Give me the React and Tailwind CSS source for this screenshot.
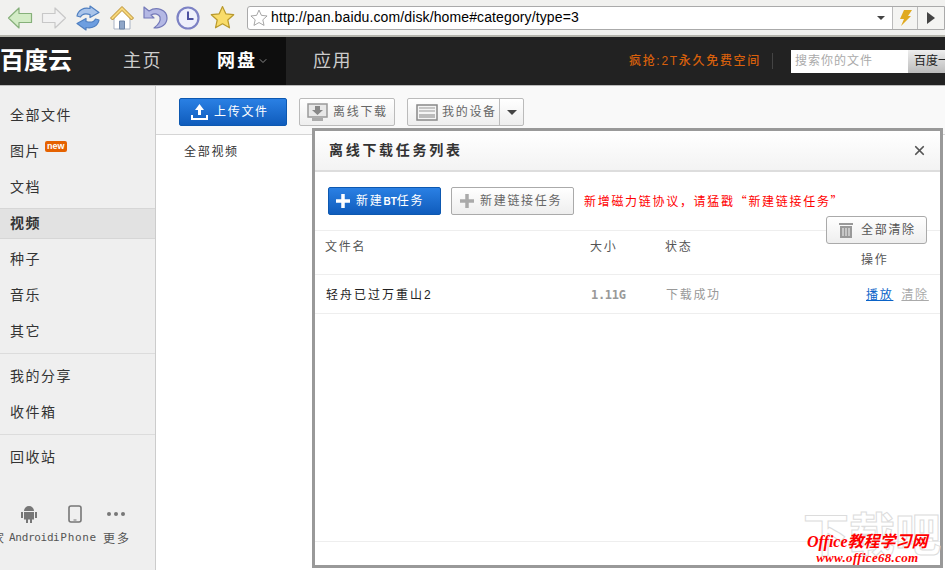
import { ChevronDown, X } from "lucide-react";

const cjk = "font-['Liberation_Sans','Noto_Sans_CJK_SC',sans-serif]";

const BackIcon = ({ flip, fill, stroke }) => (
  <svg width="26" height="24" viewBox="0 0 26 24" className={flip ? "-scale-x-100" : ""}>
    <path d="M1.500 12 12 2v5.500h12.500v9H12V22z" fill={fill} stroke={stroke} strokeWidth="1.200" strokeLinejoin="round" />
  </svg>
);

const RefreshIcon = () => (
  <svg width="26" height="26" viewBox="0 0 26 26">
    <path d="M2 11C3 5 9 2 15 3.500V1l9 6.500-9 5V9.500C10 8 7 9 5.500 12z" fill="#a9c4ea" stroke="#4f7fc0" strokeWidth="1.200" strokeLinejoin="round" />
    <path d="M24 15c-1 6-7 9-13 7.500V25l-9-6.500 9-5v3c5 1.500 8 .5 9.500-2.500z" fill="#6d9ee0" stroke="#4f7fc0" strokeWidth="1.200" strokeLinejoin="round" />
  </svg>
);

const HomeIcon = () => (
  <svg width="26" height="26" viewBox="0 0 26 26">
    <path d="M5 12v12h16V12L13 4z" fill="#fff" stroke="#a9b3c4" strokeWidth="1" />
    <path d="M10.500 24v-8h5v8z" fill="#8fa6c8" stroke="#6f86a8" strokeWidth="1" />
    <path d="M1.500 13 13 1.500 24.500 13 22.500 15 13 5.500 3.500 15z" fill="#f6d77a" stroke="#b98d2c" strokeWidth="1" strokeLinejoin="round" />
  </svg>
);

const UndoIcon = () => (
  <svg width="25" height="25" viewBox="0 0 25 25">
    <path d="M1 2v11h10L8 10c4-2 8-1 9 2 1 4-2 8-6 11 8 0 13-4 13-10C24 5 14 1 6 6z" fill="#b4b8e4" stroke="#7479b8" strokeWidth="1.200" strokeLinejoin="round" />
  </svg>
);

const ClockIcon = () => (
  <svg width="24" height="24" viewBox="0 0 24 24">
    <circle cx="12" cy="12" r="10.500" fill="#eef0fb" stroke="#7d82c4" strokeWidth="2.200" />
    <path d="M12 5.500V13h5.500" fill="none" stroke="#4d52a0" strokeWidth="2" />
  </svg>
);

const StarIcon = ({ fill, stroke, size = 25 }) => (
  <svg width={size} height={size} viewBox="0 0 25 25">
    <path d="m12.500 1.500 3.300 7.300 7.900.9-5.900 5.300 1.700 7.800-7-4-7 4 1.700-7.800L1.300 9.700l7.900-.9z" fill={fill} stroke={stroke} strokeWidth="1.200" strokeLinejoin="round" />
  </svg>
);

const UploadIcon = () => (
  <svg width="17" height="16" viewBox="0 0 17 16" fill="#fff">
    <path d="M8.500 0 13 6h-3v5H7V6H4zM0 11h2v3h13v-3h2v5H0z" />
  </svg>
);

const OfflineIcon = () => (
  <svg width="21" height="19" viewBox="0 0 21 19">
    <rect x="1" y="1" width="19" height="13" fill="#e8e8e8" stroke="#999" strokeWidth="1.500" />
    <path d="M8 3h5v4h3l-5.500 5L5 7h3z" fill="#888" />
    <path d="M5 15h11v3H5z" fill="#aaa" />
  </svg>
);

const DeviceIcon = () => (
  <svg width="22" height="19" viewBox="0 0 22 19">
    <rect x="1" y="2" width="20" height="15" fill="#f4f4f4" stroke="#888" strokeWidth="1.500" />
    <path d="M3 5h16M3 8h16" stroke="#999" />
    <rect x="3" y="11" width="16" height="4" fill="#bbb" />
  </svg>
);

const TrashIcon = () => (
  <svg width="14" height="16" viewBox="0 0 14 16" fill="#999">
    <path d="M0 1h14v2H0zM1 4h12v12H1zM3.500 6v8h1V6zm3 0v8h1V6zm3 0v8h1V6z" fillRule="evenodd" />
  </svg>
);

const AndroidIcon = () => (
  <svg width="16" height="18" viewBox="0 0 16 18" fill="#777">
    <path d="M3 6a5 5 0 0 1 10 0zM3 7h10v7.500h-2V18H9v-3.500H7V18H5v-3.500H3zM0 7h2v6H0zM14 7h2v6h-2z" />
  </svg>
);

const PhoneIcon = () => (
  <svg width="14" height="18" viewBox="0 0 14 18">
    <rect x="1" y="1" width="12" height="16" rx="2" fill="none" stroke="#777" strokeWidth="1.600" />
    <path d="M5.500 15h3" stroke="#777" />
  </svg>
);

const DotsIcon = () => (
  <svg width="18" height="4" viewBox="0 0 18 4" fill="#777">
    <circle cx="2" cy="2" r="2" />
    <circle cx="9" cy="2" r="2" />
    <circle cx="16" cy="2" r="2" />
  </svg>
);

const PlusIcon = ({ color }) => (
  <svg width="14" height="14" viewBox="0 0 14 14" fill={color}>
    <path d="M5.250 0h3.500v5.250H14v3.500H8.750V14h-3.500V8.750H0v-3.500h5.250z" />
  </svg>
);

const SideItem = ({ label, active, badge }) => (
  <div className={`flex h-9 items-center pl-2.5 text-sm tracking-[1.500px] text-[#333] ${active ? "bg-[#e2e2e2] border-y border-[#d6d6d6] h-[31px] my-[2.500px] font-bold" : ""}`}>
    {label}
    {badge && (
      <span className="mb-2.5 ml-1 rounded-[2px] bg-[#e56200] px-0.5 text-[9px] leading-[11px] font-bold tracking-normal text-white">new</span>
    )}
  </div>
);

const Divider = () => <div className="my-1 border-t border-[#dcdcdc]" />;

const App = () => {
  return (
    <div className={`relative h-[570px] w-[945px] overflow-hidden bg-white ${cjk}`}>
      {/* browser toolbar */}
      <div className="flex h-[37px] items-center border-b-2 border-[#b5b5ad] bg-[#f1f1ef] pl-[7px]">
        <div className="flex w-[240px] items-center">
          <BackIcon fill="#d3ecc6" stroke="#86b07a" />
          <div className="ml-2"><BackIcon flip fill="#f2f2f2" stroke="#c8c8c8" /></div>
          <div className="ml-2"><RefreshIcon /></div>
          <div className="ml-2"><HomeIcon /></div>
          <div className="ml-2"><UndoIcon /></div>
          <div className="ml-2"><ClockIcon /></div>
          <div className="ml-2.5"><StarIcon fill="#f9dc6a" stroke="#b99a2e" /></div>
        </div>
        <div className="flex h-[24px] flex-1 items-center rounded-l-[3px] border border-[#aaa] bg-white pl-0.5">
          <StarIcon fill="#fff" stroke="#999" size={18} />
          <span className="ml-[3px] font-['Liberation_Sans',sans-serif] text-[14px] tracking-[0.120px] text-black">http://pan.baidu.com/disk/home#category/type=3</span>
          <span className="mr-[7px] ml-auto h-0 w-0 border-x-4 border-t-4 border-x-transparent border-t-[#444]" />
          <div className="flex h-full w-[26px] items-center justify-center border-x border-[#bbb] bg-[#f4f4f2]">
            <svg width="13" height="16" viewBox="0 0 13 16"><path d="M5 0h8L9 6h3L2 16l3-7H1z" fill="#e0aa20" /></svg>
          </div>
          <div className="flex h-full w-[26px] items-center justify-center bg-[#f4f4f2]">
            <span className="h-0 w-0 border-y-[6px] border-l-[8px] border-y-transparent border-l-[#444]" />
          </div>
        </div>
      </div>

      {/* site nav */}
      <div className="flex h-[49px] items-center border-b border-[#bbb] bg-[#222]">
        <div className="w-[123px] text-[24px] leading-none font-bold text-white">百度云</div>
        <div className="w-[67px] text-[18px] tracking-[1.500px] text-[#ccc]">主页</div>
        <div className="flex h-full w-[96px] items-center bg-[#0e0e0e] pl-[27px] text-[18px] font-bold tracking-[2px] text-white">
          网盘
          <ChevronDown size={12} className="text-[#888]" />
        </div>
        <div className="ml-[27px] text-[18px] tracking-[1.500px] text-[#ccc]">应用</div>
        <div className="ml-auto text-[12px] font-medium tracking-[1.700px] text-[#d8600c]">疯抢:2T永久免费空间</div>
        <div className="mr-[18px] ml-[11px] h-4 border-l border-[#444]" />
        <div className="flex h-[23px] w-[154px] text-[12px]">
          <div className="flex w-[117px] items-center bg-white pl-1 tracking-[1px] text-[#aaa]">搜索你的文件</div>
          <div className="flex flex-1 items-center overflow-hidden bg-gradient-to-b from-[#eee] to-[#bbb] pl-1.5 whitespace-nowrap text-[#222]">百度一下</div>
        </div>
      </div>

      <div className="flex h-[484px]">
        {/* sidebar */}
        <div className="flex w-[156px] shrink-0 flex-col overflow-hidden border-r border-[#ccc] bg-[#efefef] pt-[11px]">
          <SideItem label="全部文件" />
          <SideItem label="图片" badge />
          <SideItem label="文档" />
          <SideItem label="视频" active />
          <SideItem label="种子" />
          <SideItem label="音乐" />
          <SideItem label="其它" />
          <Divider />
          <SideItem label="我的分享" />
          <SideItem label="收件箱" />
          <Divider />
          <SideItem label="回收站" />
          <div className="mt-[30px] flex items-center">
            <div className="ml-[21px] w-[46px]"><AndroidIcon /></div>
            <div className="w-[40px] pl-px"><PhoneIcon /></div>
            <DotsIcon />
          </div>
          <div className="mt-[7px] flex font-['DejaVu_Sans_Mono','Noto_Sans_CJK_SC',monospace] text-[11px] whitespace-nowrap text-[#555]">
            <span className="ml-[-8px] w-[17px] text-[12px]">家</span>
            <span className="w-[44px] tracking-[-0.300px]">Android</span>
            <span className="w-[50px] tracking-[0.700px]">iPhone</span>
            <span className="text-[12px] tracking-[2px]">更多</span>
          </div>
        </div>

        {/* main */}
        <div className="flex-1">
          <div className="flex h-[49px] items-start gap-3 border-b border-[#d5d5d5] bg-[#f9f9f9] pt-3 pl-[23px] text-[12px] tracking-[1.700px]">
            <button className="flex h-7 w-[108px] items-center rounded-[2px] border border-[#0d58b0] bg-gradient-to-b from-[#2a80e4] to-[#0f5cbc] pl-[11px] text-white">
              <UploadIcon />
              <span className="ml-1.5">上传文件</span>
            </button>
            <button className="flex h-7 w-[96px] items-center rounded-[2px] border border-[#bbb] bg-gradient-to-b from-white to-[#eee] pl-[7px] text-[#666]">
              <OfflineIcon />
              <span className="ml-[5px]">离线下载</span>
            </button>
            <div className="flex h-7 w-[117px] rounded-[2px] border border-[#bbb] bg-gradient-to-b from-white to-[#eee] text-[#666]">
              <div className="flex w-[92px] items-center border-r border-[#bbb] pl-2">
                <DeviceIcon />
                <span className="ml-1 whitespace-nowrap">我的设备</span>
              </div>
              <div className="flex flex-1 items-center justify-center">
                <span className="h-0 w-0 border-x-[5px] border-t-[5px] border-x-transparent border-t-[#444]" />
              </div>
            </div>
          </div>
          <div className="pt-2 pl-7 text-[12px] tracking-[1.700px] text-[#333]">全部视频</div>
        </div>
      </div>

      {/* offline download dialog */}
      <div className="absolute top-[128px] left-[312px] flex h-[440px] w-[631px] flex-col border-[3px] border-[#999] bg-white">
        <div className="flex h-[41px] shrink-0 items-center justify-between border-b-2 border-[#ddd] bg-gradient-to-b from-white to-[#f3f3f3] pr-[13px] pl-[14px]">
          <span className="text-[14px] font-bold tracking-[2.700px] text-[#333]">离线下载任务列表</span>
          <X size={15} strokeWidth={2.800} className="text-[#555]" />
        </div>
        <div className="flex h-[59px] shrink-0 items-center border-b border-[#eee] pl-[13px] text-[12px] tracking-[1.700px]">
          <button className="flex h-7 w-[113px] items-center rounded-[2px] border border-[#0d58b0] bg-gradient-to-b from-[#2a80e4] to-[#0f5cbc] pl-[7px] text-white">
            <PlusIcon color="#fff" />
            <span className="ml-1.5">新建<span className="text-[10px] font-bold tracking-normal">BT</span>任务</span>
          </button>
          <button className="ml-2.5 flex h-7 w-[123px] items-center rounded-[2px] border border-[#aaa] bg-gradient-to-b from-white to-[#eee] pl-[8px] text-[#666]">
            <PlusIcon color="#aaa" />
            <span className="ml-1.5">新建链接任务</span>
          </button>
          <span className="ml-2.5 font-['Noto_Sans_CJK_SC',sans-serif] tracking-[1.700px] text-[#f00]">{"新增磁力链协议\uFF0C请猛戳\u201C新建链接任务\u201D"}</span>
        </div>
        <div className="flex h-[44px] shrink-0 border-b border-[#eee] pt-[7px] pl-[10px] text-[12px] tracking-[1.700px] text-[#555]">
          <span className="w-[265px]">文件名</span>
          <span className="w-[75px]">大小</span>
          <span className="w-[196px]">状态</span>
          <span className="mt-[13px]">操作</span>
        </div>
        <div className="flex h-[39px] shrink-0 items-center border-b border-[#eee] pt-0.5 pl-[11px] text-[12px] tracking-[1.700px]">
          <span className="w-[265px] tracking-[2px] text-[#222]">轻舟已过万重山2</span>
          <span className="w-[75px] font-['DejaVu_Sans_Mono',monospace] text-[12px] font-bold tracking-[-0.300px] text-[#999]">1.11G</span>
          <span className="w-[200px] text-[#999]">下载成功</span>
          <a className="text-[#0a63c8] underline">播放</a>
          <a className="ml-2 text-[#aaa] underline">清除</a>
        </div>
        <div className="mt-auto h-6 border-t border-[#eee]" />
        <button className="absolute top-[85px] left-[511px] flex h-7 w-[101px] items-center rounded-[3px] border border-[#aaa] bg-gradient-to-b from-white to-[#eee] pl-[12px] text-[12px] tracking-[1.700px] text-[#555]">
          <TrashIcon />
          <span className="ml-2">全部清除</span>
        </button>
      </div>

      {/* watermark */}
      <div className="absolute top-[512px] left-[803px] text-[46px] leading-none font-bold whitespace-nowrap text-transparent [-webkit-text-stroke:1px_#dcdcdc]">下载吧</div>
      <div className="absolute top-[532px] left-[807px] flex flex-col items-center">
        <div className="font-['Liberation_Serif','Noto_Sans_CJK_SC',serif] text-[16px] leading-[19px] font-bold whitespace-nowrap text-[#f00] italic">Office教程学习网</div>
        <div className="font-['Liberation_Serif',serif] text-[13px] leading-[14px] font-bold tracking-[0.300px] text-[#f00] italic">www.office68.com</div>
      </div>
    </div>
  );
};

export default App;
